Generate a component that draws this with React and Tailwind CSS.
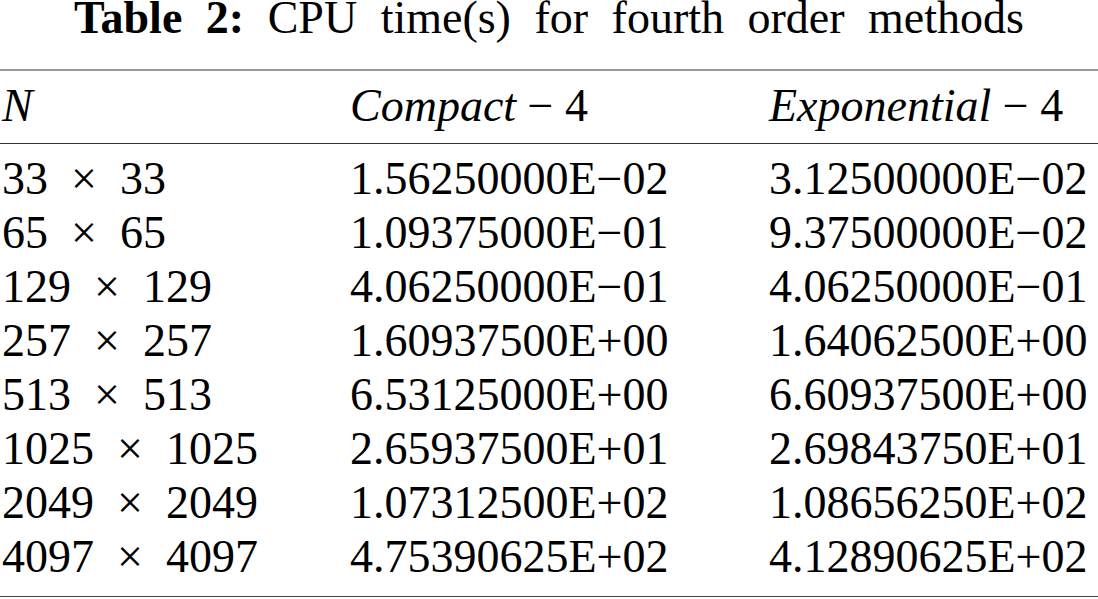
const rows = [
  ["33", "33", "1.56250000E−02", "3.12500000E−02"],
  ["65", "65", "1.09375000E−01", "9.37500000E−02"],
  ["129", "129", "4.06250000E−01", "4.06250000E−01"],
  ["257", "257", "1.60937500E+00", "1.64062500E+00"],
  ["513", "513", "6.53125000E+00", "6.60937500E+00"],
  ["1025", "1025", "2.65937500E+01", "2.69843750E+01"],
  ["2049", "2049", "1.07312500E+02", "1.08656250E+02"],
  ["4097", "4097", "4.75390625E+02", "4.12890625E+02"],
];

export default function App() {
  return (
    <div className="w-[1098px] h-[599px] bg-white text-black overflow-hidden font-['Times_New_Roman',Times,serif] text-[46px]">
      {/* Caption */}
      <div className="-mt-2 text-center leading-[51px] [word-spacing:12px]">
        <span className="font-bold">Table 2:</span> CPU time(s) for fourth order methods
      </div>

      {/* Top rule */}
      <div className="mt-[26px] h-[2px] bg-[#9a9a9a]" />

      {/* Header */}
      <div className="grid grid-cols-[348px_419px_1fr] pl-[2px] pt-[8px] pb-[10px] leading-[54px] italic">
        <div>N</div>
        <div>
          Compact <span className="not-italic">− 4</span>
        </div>
        <div>
          Exponential <span className="not-italic">− 4</span>
        </div>
      </div>

      <div className="h-px bg-[#333]" />

      {/* Body */}
      <div className="pt-[8px] pb-[12px] pl-[2px] leading-[54px]">
        {rows.map((r) => (
          <div key={r[0]} className="grid grid-cols-[348px_419px_1fr]">
            <div className="whitespace-nowrap">
              {r[0]}
              <span className="inline-block w-[72px] text-center">×</span>
              {r[1]}
            </div>
            <div>{r[2]}</div>
            <div>{r[3]}</div>
          </div>
        ))}
      </div>

      <div className="h-px bg-[#444]" />
    </div>
  );
}
